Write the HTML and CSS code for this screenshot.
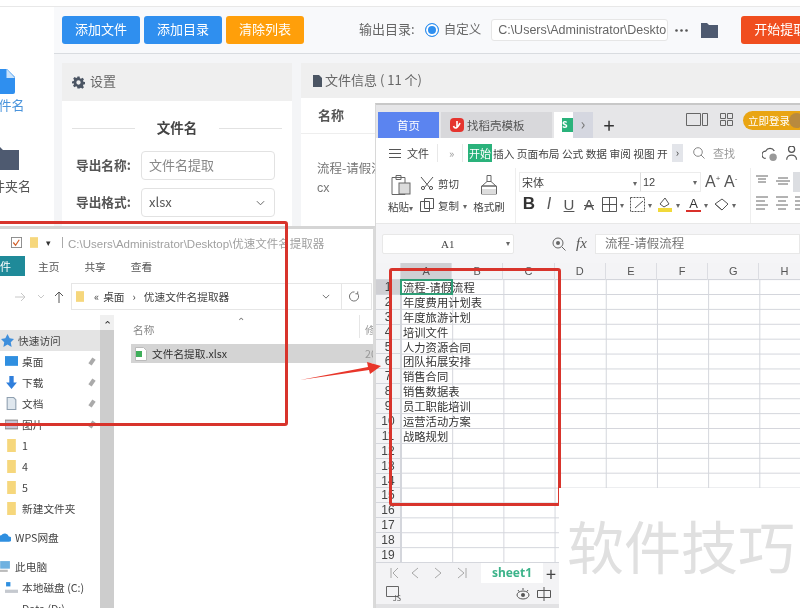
FILE: index.html
```html
<!DOCTYPE html>
<html lang="zh">
<head>
<meta charset="utf-8">
<title>文件名提取</title>
<link rel="stylesheet" href="styles.css">
</head>
<body>
<div class="stage">
  <div class="app">
    <aside class="side">
      <div class="side-item active">
        <svg class="side-ico" viewBox="0 0 30 25"><path fill="#2f8fef" d="M0 0h19l8 8v15a2 2 0 0 1-2 2H0z"/><path fill="#fff" d="M18.500 0v9h8.500z" opacity=".75"/></svg>
        <span>文件名</span>
      </div>
      <div class="side-item">
        <svg class="side-ico" viewBox="0 0 30 23"><path fill="#4e5a70" d="M0 0h11l3 3h16v20H0z"/></svg>
        <span>文件夹名</span>
      </div>
    </aside>
    <main class="main">
      <header class="toolbar">
        <button class="btn blue">添加文件</button>
        <button class="btn blue">添加目录</button>
        <button class="btn orange">清除列表</button>
        <span class="out-label">输出目录:</span>
        <span class="radio"></span>
        <span class="radio-text">自定义</span>
        <span class="path-box">C:\Users\Administrator\Desktop\优速</span>
        <svg class="dots" viewBox="0 0 13 3"><circle cx="1.500" cy="1.500" r="1.300" fill="#555"/><circle cx="6.500" cy="1.500" r="1.300" fill="#555"/><circle cx="11.500" cy="1.500" r="1.300" fill="#555"/></svg>
        <svg class="tool-folder" viewBox="0 0 17 15"><path fill="#4e5a70" d="M0 0h6l2 2h9v13H0z"/></svg>
        <button class="btn red">开始提取</button>
      </header>
      <div class="panels">
        <section class="settings">
          <div class="panel-head tall">
            <svg class="gear" viewBox="0 0 24 24"><path fill="#4b5563" d="M10 1h4l.6 3.200 2 .8 2.700-1.800 2.800 2.800-1.800 2.700.8 2 3.200.6v4l-3.200.6-.8 2 1.800 2.700-2.800 2.800-2.700-1.800-2 .8L14 23h-4l-.6-3.200-2-.8-2.700 1.800-2.800-2.800 1.800-2.700-.8-2L0 14v-4l3.200-.6.8-2L2.200 4.700 5 1.900l2.700 1.800 2-.8zM12 8a4 4 0 1 0 0 8 4 4 0 0 0 0-8z"/></svg>
            <span>设置</span>
          </div>
          <div class="settings-body">
            <div class="divider"><i></i><b>文件名</b><i></i></div>
            <div class="form-row"><label>导出名称:</label><span class="field muted">文件名提取</span></div>
            <div class="form-row"><label>导出格式:</label><span class="field">xlsx<svg class="chev" viewBox="0 0 10 6"><path fill="none" stroke="#666" stroke-width="1.100" d="M1 1l4 4 4-4"/></svg></span></div>
          </div>
        </section>
        <section class="files">
          <div class="panel-head">
            <svg class="doc" viewBox="0 0 9 12"><path fill="#4b5563" d="M0 0h6l3 3v9H0z"/></svg>
            <span>文件信息 ( 11 个)</span>
          </div>
          <div class="file-th">名称</div>
          <div class="file-td">流程-请假流程<br><small>cx</small></div>
        </section>
      </div>
    </main>
  </div>

  <section class="explorer">
    <div class="ex-title">
      <svg class="ex-check" viewBox="0 0 12 12"><rect x=".5" y=".5" width="11" height="11" fill="#fff" stroke="#888"/><path fill="none" stroke="#d2602a" stroke-width="1.300" d="M2.500 6l2.500 3 4-6"/></svg>
      <svg class="ico-folder" viewBox="0 0 9 12"><path fill="#f6d77c" d="M0 0h9v12H0z"/></svg>
      <span class="ex-drop">▾</span>
      <span class="ex-sep"></span>
      <span class="ex-path">C:\Users\Administrator\Desktop\优速文件名提取器</span>
    </div>
    <div class="ex-tabs">
      <span class="ex-tab-file">文件</span>
      <span>主页</span><span>共享</span><span>查看</span>
    </div>
    <div class="ex-nav">
      <svg class="nav-arrows" viewBox="0 0 50 12"><path fill="none" stroke="#c8c8c8" d="M0 6h10M6 2l4 4-4 4M23 4l3 3 3-3"/><path fill="none" stroke="#555" d="M44 12V1M40 5l4-4 4 4"/></svg>
      <div class="addr">
        <svg class="ico-folder" viewBox="0 0 9 12"><path fill="#f6d77c" d="M0 0h9v12H0z"/></svg>
        <span class="addr-a">«</span><span>桌面</span><span class="addr-b">›</span><span>优速文件名提取器</span>
        <svg class="addr-chev" viewBox="0 0 10 6"><path fill="none" stroke="#555" d="M1 1l4 4 4-4"/></svg>
        <span class="addr-refresh"><svg viewBox="0 0 12 12"><path fill="none" stroke="#666" d="M9.500 3A5 5 0 1 1 6 1M9.500 .5V3H7"/></svg></span>
      </div>
    </div>
    <div class="ex-body">
      <div class="pane">
        <div class="pane-list">
          <div class="pr sel lv0"><svg class="pi" viewBox="0 0 12 12"><path fill="#3f8fdc" d="M6 0l2 4 4 .5-3 3 .8 4.500L6 9.800 2.200 12 3 7.500 0 4.500 4 4z"/></svg>快速访问</div>
          <div class="pr"><svg class="pi" viewBox="0 0 12 12"><rect y="1" width="12" height="9" fill="#2f8fe0"/></svg>桌面<em></em></div>
          <div class="pr"><svg class="pi" viewBox="0 0 12 12"><path fill="#2f7fdc" d="M4 0h4v6h3l-5 6-5-6h3z"/></svg>下载<em></em></div>
          <div class="pr"><svg class="pi" viewBox="0 0 12 12"><path fill="#dfe7ee" stroke="#8fa0b0" d="M2 .5h6l2 2v9H2z"/></svg>文档<em></em></div>
          <div class="pr"><svg class="pi" viewBox="0 0 12 12"><rect y="2" width="12" height="8" fill="#c9c5d6" stroke="#888"/></svg>图片<em></em></div>
          <div class="pr"><svg class="pi" viewBox="0 0 12 12"><path fill="#f6d77c" d="M2 0h8v12H2z"/></svg>1</div>
          <div class="pr"><svg class="pi" viewBox="0 0 12 12"><path fill="#f6d77c" d="M2 0h8v12H2z"/></svg>4</div>
          <div class="pr"><svg class="pi" viewBox="0 0 12 12"><path fill="#f6d77c" d="M2 0h8v12H2z"/></svg>5</div>
          <div class="pr"><svg class="pi" viewBox="0 0 12 12"><path fill="#f6d77c" d="M2 0h8v12H2z"/></svg>新建文件夹</div>
          <div class="pr lv0 gap"><svg class="pi" viewBox="0 0 12 12"><path fill="#2f8fe0" d="M3 10a3 3 0 0 1 0-6 4 4 0 0 1 7 1 2.500 2.500 0 0 1 0 5z"/></svg>WPS网盘</div>
          <div class="pr lv0 gap"><svg class="pi" viewBox="0 0 12 12"><rect x="2" y="1" width="9" height="7" fill="#6fb1e0"/><path fill="#bbb" d="M0 9h9v2H0z"/></svg>此电脑</div>
          <div class="pr"><svg class="pi" viewBox="0 0 12 12"><path fill="#2f8fe0" d="M1 1h4v4H1z"/><path fill="#c5c9cf" d="M0 8h12v3H0z"/></svg>本地磁盘 (C:)</div>
          <div class="pr"><svg class="pi" viewBox="0 0 12 12"><path fill="#c5c9cf" d="M0 8h12v3H0z"/></svg>Data (D:)</div>
        </div>
        <div class="pane-scroll"><span>⌃</span></div>
      </div>
      <div class="list">
        <div class="list-sort">⌃</div>
        <div class="list-head"><span>名称</span><i></i><span class="col2">修</span></div>
        <div class="list-row">
          <svg class="xl" viewBox="0 0 12 14"><path fill="#fff" stroke="#bbb" d="M.5.500h8l3 3v10H.5z"/><rect x="1" y="4" width="6" height="6" fill="#3fae5a"/></svg>
          <span>文件名提取.xlsx</span><span class="col2">20</span>
        </div>
      </div>
    </div>
  </section>

  <section class="wps">
    <div class="w-tabs">
      <span class="w-home">首页</span>
      <span class="w-tab2">
        <svg viewBox="0 0 14 14"><rect width="14" height="14" rx="4" fill="#e5342f"/><path fill="none" stroke="#fff" stroke-width="1.600" d="M3.500 8c1 3 4 3 6.500-3M7 3v6"/></svg>
        找稻壳模板
      </span>
      <span class="w-tab3"><b>S</b></span>
      <span class="w-more">›</span>
      <span class="w-plus">+</span>
      <svg class="w-book" viewBox="0 0 22 13"><path fill="none" stroke="#666" d="M.5.500h14v12H.5zM16.500.500h5v12h-5z"/></svg>
      <svg class="w-grid" viewBox="0 0 13 13"><path fill="none" stroke="#666" d="M.5.500h5v5h-5zM7.500.500h5v5h-5zM.5 7.500h5v5h-5zM7.500 7.500h5v5h-5z"/></svg>
      <span class="w-login">立即登录<i class="w-avatar"></i></span>
    </div>
    <div class="w-menu">
      <svg class="m-burger" viewBox="0 0 12 9"><path stroke="#555" d="M0 .5h12M0 4.500h12M0 8.500h12"/></svg>
      <span class="m-file">文件</span>
      <span class="m-sep"></span>
      <span class="m-dbl">»</span>
      <span class="m-sep s2"></span>
      <span class="m-on">开始</span>
      <span class="m-items">插入 页面布局 公式 数据 审阅 视图 开</span>
      <span class="m-gt">›</span>
      <svg class="m-search" viewBox="0 0 12 12"><circle cx="5" cy="5" r="4.300" fill="none" stroke="#888"/><path stroke="#888" d="M8 8l3.500 3.500"/></svg>
      <span class="m-find">查找</span>
      <svg class="m-cloud" viewBox="0 0 30 12"><path fill="none" stroke="#555" d="M3 10a3 3 0 0 1 0-6 4 4 0 0 1 7 0M24 5a2.500 2.500 0 1 0 0-5 2.500 2.500 0 0 0 0 5zM20 11c0-5 8-5 8 0"/><circle cx="9" cy="9" r="3" fill="#999"/></svg>
    </div>
    <div class="ribbon">
      <div class="rb-clip">
        <svg class="big" viewBox="0 0 20 20"><path fill="#fff" stroke="#666" d="M1 2.500h13v17H1zM5 .5h5v4H5z"/><rect x="8" y="8" width="11" height="11" fill="#dcdcdc" stroke="#666"/></svg>
        <span>粘贴<small>▾</small></span>
      </div>
      <div class="rb-cut">
        <div class="rb-line"><svg viewBox="0 0 14 14"><path fill="none" stroke="#555" d="M1 1l9 11M13 1L4 12"/><circle cx="3" cy="12" r="1.600" fill="none" stroke="#555"/><circle cx="11" cy="12" r="1.600" fill="none" stroke="#555"/></svg>剪切</div>
        <div class="rb-line"><svg viewBox="0 0 14 14"><path fill="#fff" stroke="#555" d="M4.500.5h9v10h-9zM.5 3.500h9v10h-9z"/></svg>复制<small>▾</small></div>
      </div>
      <div class="rb-brush">
        <svg class="big" viewBox="0 0 18 20"><path fill="#fff" stroke="#666" d="M7 .5h4v6H7zM7 6.500L2 11h14l-5-4.500zM1.500 11h15v8h-15z"/><rect x="2" y="14" width="14" height="5" fill="#ddd"/></svg>
        <span>格式刷</span>
      </div>
      <div class="rb-font">
        <div class="font-row">
          <span class="fbox f1">宋体<small>▾</small></span><span class="fbox f2">12<small>▾</small></span>
          <span class="aa">A<sup>+</sup></span><span class="aa">A<sup>-</sup></span>
        </div>
        <div class="fmt-row">
          <b class="fb">B</b><i class="fi">I</i><u class="fu">U</u><s class="fs">A</s>
          <svg viewBox="0 0 15 15"><path fill="none" stroke="#555" d="M.5.500h14v14H.5zM7.500 .5v14M.5 7.500h14"/></svg><small>▾</small>
          <svg viewBox="0 0 15 15"><path fill="none" stroke="#555" stroke-dasharray="2 1" d="M.5.500h14v14H.5z"/><path stroke="#555" d="M5 11l8-7"/></svg><small>▾</small>
          <svg viewBox="0 0 15 15"><path fill="none" stroke="#555" d="M7 1L2 7l4 3 5-3z"/><rect y="11" width="14" height="4" fill="#f1d93a"/></svg><small>▾</small>
          <span class="fa">A</span><small>▾</small>
          <svg viewBox="0 0 15 15"><path fill="none" stroke="#555" d="M8 2l6 5-6 6-7-6zM1 7l7 6"/></svg><small>▾</small>
        </div>
      </div>
      <div class="rb-align">
        <svg viewBox="0 0 46 46"><rect x="38" y="4" width="8" height="20" fill="#dcdee2"/><path stroke="#666" d="M1 8h12M3 11h8M3 14h8M21 13h14M23 10h10M23 16h10M1 29h12M1 33h9M1 37h12M1 41h9M21 29h12M23 33h8M21 37h12M23 41h8M40 29h6M40 33h6M40 37h6M40 41h6"/></svg>
      </div>
    </div>
    <div class="formula">
      <span class="namebox">A1<small>▾</small></span>
      <svg class="fx-zoom" viewBox="0 0 14 14"><circle cx="6" cy="6" r="5" fill="none" stroke="#666"/><circle cx="6" cy="6" r="2" fill="#666"/><path stroke="#666" d="M10 10l3.500 3.500"/></svg>
      <i class="fx">fx</i>
      <span class="fbar">流程-请假流程</span>
    </div>
    <div class="sheet">
      <div class="col-head">
        <span class="corner"></span>
        <span class="on">A</span><span>B</span><span>C</span><span>D</span><span>E</span><span>F</span><span>G</span><span>H</span>
      </div>
      <div class="rows">
        <div class="r first"><span class="n">1</span><span class="c"><span class="active-cell"></span>流程-请假流程</span></div>
        <div class="r"><span class="n">2</span><span class="c">年度费用计划表</span></div>
        <div class="r"><span class="n">3</span><span class="c">年度旅游计划</span></div>
        <div class="r"><span class="n">4</span><span class="c">培训文件</span></div>
        <div class="r"><span class="n">5</span><span class="c">人力资源合同</span></div>
        <div class="r"><span class="n">6</span><span class="c">团队拓展安排</span></div>
        <div class="r"><span class="n">7</span><span class="c">销售合同</span></div>
        <div class="r"><span class="n">8</span><span class="c">销售数据表</span></div>
        <div class="r"><span class="n">9</span><span class="c">员工职能培训</span></div>
        <div class="r"><span class="n">10</span><span class="c">运营活动方案</span></div>
        <div class="r"><span class="n">11</span><span class="c">战略规划</span></div>
        <div class="r"><span class="n">12</span></div>
        <div class="r"><span class="n">13</span></div>
        <div class="r"><span class="n">14</span></div>
        <div class="r"><span class="n">15</span></div>
        <div class="r"><span class="n">16</span></div>
        <div class="r"><span class="n">17</span></div>
        <div class="r"><span class="n">18</span></div>
        <div class="r"><span class="n">19</span></div>
      </div>
      <div class="sheet-tabs">
        <svg viewBox="0 0 84 12"><path fill="none" stroke="#a8a8a8" d="M8 1L3 6l5 5M1 1v10M28 1l-6 5 6 5M45 1l6 5-6 5M68 1l6 5-6 5M76 1v10"/></svg>
        <span class="sheet1">sheet1</span>
        <span class="sheet-plus">+</span>
      </div>
      <div class="status">
        <svg class="st-js" viewBox="0 0 15 15"><path fill="none" stroke="#666" d="M.5.500h12v10H.5z"/><text x="7" y="15" font-size="7" fill="#555">JS</text></svg>
        <svg class="st-eye" viewBox="0 0 14 12"><ellipse cx="7" cy="7" rx="6" ry="4" fill="none" stroke="#555"/><circle cx="7" cy="7" r="2" fill="#555"/><path stroke="#555" d="M2 2l1 1.500M7 0v2M12 2l-1 1.500"/></svg>
        <svg class="st-read" viewBox="0 0 14 14"><path fill="none" stroke="#555" d="M.5 3.500h13v7H.5zM7 0v14"/></svg>
      </div>
    </div>
  </section>

  <div class="mark red-a"></div>
  <div class="mark red-b"></div>
  <svg class="arrow" viewBox="0 0 81 18"><polygon fill="#e8362a" points="0,18 68,5 67,0 81,4 70,12 69,8"/></svg>
  <div class="watermark">软件技巧</div>
</div>
</body>
</html>
```
FILE: styles.css
```css
* { box-sizing: border-box; }
html, body { margin: 0; padding: 0; }
body { width: 800px; height: 608px; overflow: hidden; background: #fff; font-family: "Noto Sans CJK SC", "Noto Sans", sans-serif; color: #444; }
svg { display: block; flex: none; }
.stage { position: relative; width: 800px; height: 608px; overflow: hidden; filter: blur(.35px); }

/* background application */
.app { display: flex; height: 608px; padding-top: 6px; background: #fff; }
.side { width: 54px; flex: none; padding-top: 62px; overflow: hidden; border-top: 1px solid #e8e8e8; }
.side-item { width: 64px; margin: 0 0 44px -27px; display: flex; flex-direction: column; align-items: center; font-size: 13px; line-height: 18px; color: #555; }
.side-item.active { color: #4a94dc; margin-bottom: 33px; }
.side-item.active span { margin-top: -1px; }
.side-ico { width: 30px; height: 25px; margin-bottom: 3px; margin-left: -4px; }
.side-item + .side-item .side-ico { width: 30px; height: 23px; margin: 0 0 7px -2px; }
.main { flex: 1; min-width: 0; background: #f4f5f7; }
.toolbar { height: 48px; display: flex; align-items: center; padding: 0 0 0 8px; background: #f8f9fb; border-top: 1px solid #e8e8e8; border-bottom: 1px solid #d9dce0; white-space: nowrap; }
.btn { height: 28px; border: 0; border-radius: 3px; color: #fff; font: 13px "Noto Sans CJK SC", sans-serif; padding: 0 0 3px; flex: none; }
.blue { width: 78px; margin-right: 4px; background: #2f8fef; }
.orange { width: 78px; background: #ff9f0a; }
.red { width: 78px; margin-left: 23px; background: #f04e1f; }
.out-label { flex: none; margin-left: 55px; padding-bottom: 3px; font-size: 13px; color: #666; }
.radio { flex: none; width: 14px; height: 14px; margin: 0 0 1px 10px; border-radius: 50%; background: #2f8fef; border: 1px solid #2f8fef; box-shadow: inset 0 0 0 2px #fff; }
.radio-text { flex: none; margin-left: 5px; padding-bottom: 3px; font-size: 12.500px; color: #666; }
.path-box { flex: none; width: 177px; height: 22px; margin-left: 10px; padding: 0 6px; overflow: hidden; background: #fff; border: 1px solid #e6e6e6; border-radius: 3px; font: 12.500px/21px "Liberation Sans", sans-serif; color: #666; }
.dots { width: 13px; height: 3px; margin-left: 7px; }
.tool-folder { width: 17px; height: 15px; margin-left: 13px; }
.panels { display: flex; gap: 9px; padding: 9px 0 0 8px; }
.settings { width: 230px; flex: none; }
.files { flex: 1; }
.panel-head { height: 35px; display: flex; align-items: center; gap: 5px; padding-left: 12px; background: #efefef; font-size: 13px; color: #666; white-space: nowrap; }
.panel-head span { padding-bottom: 2px; }
.panel-head.tall { height: 38px; padding-left: 10px; }
.panel-head.tall span { padding-bottom: 3px; }
.gear { width: 13px; height: 13px; }
.doc { width: 9px; height: 12px; margin-right: -2px; }
.settings-body { height: 300px; background: #fff; padding: 16px 10px 0; }
.divider { display: flex; align-items: center; justify-content: space-between; height: 20px; font-size: 13.500px; color: #444; }
.divider i { width: 63px; height: 1px; margin-top: 2px; background: #e2e2e2; }
.form-row { display: flex; align-items: center; gap: 11px; height: 29px; margin-top: 8px; padding-left: 4px; }
.divider + .form-row { margin-top: 14px; }
.form-row label { width: 54px; padding-bottom: 3px; font-size: 12.700px; font-weight: 700; color: #555; white-space: nowrap; }
.field { position: relative; width: 134px; height: 29px; padding-left: 7px; background: #fff; border: 1px solid #e2e2e2; border-radius: 4px; font: 13px/25px "Noto Sans CJK SC", sans-serif; color: #555; }
.field.muted { color: #888; }
.chev { position: absolute; right: 9px; top: 11px; width: 9px; height: 6px; }
.file-th { height: 36px; padding-left: 17px; background: #fff; border-bottom: 1px solid #eee; font-size: 13px; font-weight: 700; line-height: 34px; color: #555; }
.file-td { height: 300px; padding: 24px 0 0 16px; background: #fff; font-size: 12.500px; line-height: 19px; color: #777; white-space: nowrap; }
.file-td small { font: 12.500px "Liberation Sans", sans-serif; }

/* explorer */
.explorer { position: absolute; left: 0; top: 226px; width: 375px; height: 382px; display: flex; flex-direction: column; background: #fff; border-top: 3px solid #d5d5d5; border-right: 2px solid #dadada; font-size: 10.700px; color: #444; }
.ex-title { height: 27px; display: flex; align-items: center; padding-left: 11px; flex: none; }
.ex-check { width: 11px; height: 11px; }
.ico-folder { width: 8px; height: 11px; margin-left: 8px; }
.ex-drop { width: 8px; margin-left: 8px; font-size: 9px; color: #333; }
.ex-sep { width: 1px; height: 11px; margin: 0 5px 0 8px; background: #aaa; }
.ex-path { font-size: 11.500px; color: #a0a0a0; white-space: nowrap; font-family: "Liberation Sans", "Noto Sans CJK SC", sans-serif; }
.ex-tabs { height: 20px; flex: none; display: flex; align-items: center; gap: 25px; font-size: 10.700px; color: #555; }
.ex-tab-file { width: 25px; height: 20px; margin-right: -12px; overflow: hidden; white-space: nowrap; text-indent: -11px; background: #1f8a99; color: #fff; line-height: 20px; font-size: 11px; }
.ex-nav { height: 34px; flex: none; display: flex; align-items: center; padding: 7px 1px 0 15px; }
.nav-arrows { width: 50px; height: 12px; }
.addr { flex: 1; margin-left: 6px; height: 27px; display: flex; align-items: center; border: 1px solid #e6e6e6; padding-left: 4px; font-size: 10.700px; white-space: nowrap; color: #444; }
.addr .ico-folder { margin-left: 0; }
.addr-a { margin: 0 4px 0 10px; }
.addr-b { margin: 0 8px; }
.addr-chev { width: 8px; height: 5px; margin-left: auto; margin-right: 11px; }
.addr-refresh { width: 30px; height: 25px; padding: 7px 0 0 7px; border-left: 1px solid #e6e6e6; }
.addr-refresh svg { width: 11px; height: 11px; }
.ex-body { flex: 1; min-height: 0; display: flex; padding-top: 5px; overflow: hidden; }
.pane { width: 114px; flex: none; display: flex; }
.pane-list { width: 100px; flex: none; padding-top: 15px; }
.pr { height: 21px; display: flex; align-items: center; padding-left: 5px; gap: 4px; font-size: 10.700px; white-space: nowrap; position: relative; }
.pi { width: 13px; height: 13px; }
.pr em { position: absolute; left: 90px; top: 7px; width: 4px; height: 7px; background: #aaa; transform: rotate(35deg); }
.lv0 { padding-left: 0; margin-left: -2px; }
.sel { background: #e4e4e4; margin-left: 0; padding-left: 1px; }
.gap { margin-top: 8px; }
.pane-scroll { width: 14px; height: 100%; background: #cdcdcd; }
.pane-scroll span { display: block; height: 15px; background: #f0f0f0; text-align: center; font-size: 11px; line-height: 18px; color: #333; }
.list { flex: 1; position: relative; padding: 0 0 0 17px; overflow: hidden; }
.list-sort { position: absolute; left: 123px; top: -2px; font-size: 10px; color: #777; }
.list-head { height: 29px; display: flex; align-items: center; padding: 0 0 0 2px; font-size: 10.700px; color: #888; position: relative; }
.list-head i { position: absolute; left: 228px; top: 0; width: 1px; height: 23px; background: #e6e6e6; }
.list-row { height: 19px; display: flex; align-items: center; gap: 5px; padding-left: 4px; background: #d4d4d4; font-size: 10.700px; color: #333; white-space: nowrap; position: relative; }
.xl { width: 12px; height: 14px; }
.col2 { position: absolute; left: 234px; color: #999; }

/* wps */
.wps { position: absolute; left: 375px; top: 103px; width: 425px; height: 505px; display: flex; flex-direction: column; overflow: hidden; background: #e2e2e4; border-top: 2px solid #c8c8c8; border-left: 1px solid #d8d8d8; font-size: 12px; color: #444; }
.w-tabs { height: 33px; flex: none; display: flex; align-items: flex-end; padding-left: 2px; background: #e6e6e8; }
.w-tabs > * { flex: none; }
.w-home { width: 61px; height: 26px; background: #5b84f0; color: #fff; text-align: center; line-height: 27px; font-size: 11.500px; }
.w-tab2 { width: 111px; height: 26px; margin-left: 2px; display: flex; align-items: center; gap: 3px; padding-left: 9px; background: #d8d8db; font-size: 11.500px; color: #555; }
.w-tab2 svg { width: 14px; height: 14px; }
.w-tab3 { width: 19px; height: 26px; margin-left: 2px; padding: 6px 0 0 8px; background: #fff; }
.w-tab3 b { display: block; width: 11px; height: 14px; background: #2ab27b; color: #fff; font-size: 9px; line-height: 14px; }
.w-more { width: 20px; height: 26px; background: #d5d7e0; text-align: center; font-size: 16px; line-height: 22px; color: #777; }
.w-plus { width: 32px; text-align: center; font-size: 20px; line-height: 26px; color: #333; }
.w-book { width: 22px; height: 13px; margin: 0 12px 12px 61px; }
.w-grid { width: 13px; height: 13px; margin: 0 10px 12px 0; }
.w-login { width: 60px; height: 19px; margin-bottom: 8px; padding-left: 5px; border-radius: 10px 0 0 10px; background: #e9a513; color: #fff; font-size: 10.500px; line-height: 19px; white-space: nowrap; position: relative; }
.w-avatar { position: absolute; left: 46px; top: 2px; width: 15px; height: 15px; border-radius: 50%; background: #b98a3e; }
.w-menu { height: 30px; flex: none; display: flex; align-items: center; background: #fff; font-size: 11px; color: #444; white-space: nowrap; }
.w-menu > * { flex: none; }
.m-burger { width: 12px; height: 9px; margin-left: 13px; }
.m-file { margin-left: 6px; }
.m-sep { width: 1px; height: 18px; margin-left: 8px; background: #e8e8e8; }
.m-dbl { margin-left: 11px; width: 10px; color: #999; }
.m-sep.s2 { margin-left: 3px; }
.m-on { width: 24px; height: 18px; margin-left: 5px; background: #2ab27b; color: #fff; text-align: center; line-height: 18px; }
.m-items { width: 179px; margin-left: 1px; font-size: 10.700px; overflow: hidden; }
.m-gt { width: 11px; height: 18px; background: #e3e5ea; text-align: center; line-height: 16px; }
.m-search { width: 12px; height: 12px; margin-left: 10px; }
.m-find { margin-left: 8px; color: #999; }
.m-cloud { width: 37px; height: 15px; margin-left: 27px; }
.ribbon { height: 56px; flex: none; display: flex; padding-left: 9px; background: #fff; border-bottom: 1px solid #e8e8e8; }
.ribbon > * { flex: none; }
.rb-clip { width: 31px; padding-top: 7px; display: flex; flex-direction: column; align-items: center; font-size: 10.500px; white-space: nowrap; }
.big { width: 20px; height: 20px; margin-bottom: 4px; }
.rb-clip small, .rb-line small, .fbox small, .fmt-row small, .namebox small { font-size: 8px; color: #666; }
.rb-cut { width: 54px; padding: 4px 0 0 4px; }
.rb-line { display: flex; align-items: center; gap: 4px; height: 22px; font-size: 10.500px; white-space: nowrap; }
.rb-line svg { width: 14px; height: 14px; }
.rb-brush { width: 38px; padding-top: 7px; display: flex; flex-direction: column; align-items: center; font-size: 10.500px; white-space: nowrap; }
.rb-font { width: 235px; margin-left: 7px; padding: 4px 0 0 3px; border-left: 1px solid #eee; }
.font-row { display: flex; align-items: center; height: 20px; }
.fbox { height: 20px; display: flex; align-items: center; justify-content: space-between; padding: 0 3px 0 2px; border: 1px solid #ececec; font-size: 11px; }
.f1 { width: 122px; }
.f2 { width: 61px; border-left: 1px solid #ddd; margin-left: -1px; font-family: "Liberation Sans", sans-serif; }
.aa { width: 19px; padding-left: 4px; font: 16px "Liberation Sans", sans-serif; color: #555; white-space: nowrap; }
.aa sup { font-size: 8px; line-height: 0; }
.fmt-row { display: flex; align-items: center; height: 24px; }
.fmt-row svg { width: 15px; height: 15px; margin-left: 0; }
.fmt-row small { width: 13px; padding-left: 3px; }
.fb, .fi, .fu, .fs, .fa { font: 700 17px "Liberation Sans", sans-serif; width: 20px; text-align: center; color: #333; }
.fi { font: italic 400 16px "Liberation Sans", sans-serif; color: #555; }
.fu, .fs { font-weight: 400; font-size: 15px; color: #555; }
.fs { width: 23px; padding-right: 3px; }
.fa { width: 15px; font-weight: 400; border-bottom: 2px solid #d9302a; line-height: 13px; font-size: 13px; }
.rb-align { width: 50px; padding: 0 0 0 4px; border-left: 1px solid #eee; }
.rb-align svg { width: 46px; height: 46px; }
.formula { height: 39px; flex: none; display: flex; align-items: center; padding-left: 6px; background: #f5f5f7; }
.namebox { width: 132px; height: 20px; display: flex; align-items: center; justify-content: space-between; padding: 0 3px 0 58px; background: #fff; border: 1px solid #e8e8e8; border-radius: 2px; font: 11px "Liberation Serif", serif; }
.fx-zoom { width: 14px; height: 14px; margin-left: 38px; }
.fx { margin-left: 10px; width: 14px; font: italic 15px "Liberation Serif", serif; color: #555; }
.fbar { flex: 1; height: 20px; margin-left: 5px; padding-left: 9px; background: #fff; border: 1px solid #e8e8e8; font-size: 12.500px; line-height: 16px; color: #777; }
.sheet { flex: 1; min-height: 0; display: flex; flex-direction: column; }
.col-head { height: 17px; flex: none; display: grid; grid-template-columns: 25px repeat(8, 51.2px); background: #f4f4f6; border-bottom: 1px solid #d4d6dc; font: 11px/17px "Liberation Sans", sans-serif; text-align: center; color: #555; }
.col-head span { border-right: 1px solid #dcdde2; }
.col-head .on { background: #cfcfd3; }
.rows { height: 283px; flex: none; background-color: #fff; background-image: linear-gradient(#d4d6dc 1px, transparent 1px), linear-gradient(90deg, #d4d6dc 1px, transparent 1px); background-size: 100% 14.900px, 51.200px 100%; background-position: 0 14px, 25px 0; }
.r { height: 14.900px; display: flex; font-size: 11px; line-height: 14.500px; color: #333; white-space: nowrap; }
.n { width: 25px; flex: none; background: #f4f4f6; text-align: center; font: 12px/15px "Liberation Sans", sans-serif; color: #444; border-bottom: 1px solid #d4d6dc; border-right: 1px solid #d4d6dc; }
.first .n { background: #cfcfd3; }
.c { position: relative; padding-left: 2px; font-size: 11.300px; }
.active-cell { position: absolute; left: -1px; top: -1px; width: 52.500px; height: 16px; border: 2px solid #2f9e76; }
.sheet-tabs { height: 20px; flex: none; display: flex; align-items: center; padding-left: 14px; background: #f3f3f5; }
.sheet-tabs svg { width: 84px; height: 12px; }
.sheet1 { width: 62px; height: 20px; margin-left: 7px; background: #fff; text-align: center; font: 700 12px/20px "Noto Sans", sans-serif; color: #3cb38a; }
.sheet-plus { margin-left: 3px; font-size: 18px; line-height: 20px; color: #444; }
.status { height: 21px; flex: none; display: flex; align-items: center; padding-left: 10px; background: #f3f3f5; }
.st-js { width: 15px; height: 15px; }
.st-eye { width: 14px; height: 12px; margin-left: 115px; }
.st-read { width: 14px; height: 14px; margin-left: 7px; }

/* annotations */
.mark { position: absolute; border: 3px solid #d8342c; border-radius: 3px; }
.red-a { left: -6px; top: 221px; width: 294px; height: 205px; }
.red-b { left: 389px; top: 268px; width: 172px; height: 238px; }
.arrow { position: absolute; left: 300px; top: 362px; width: 81px; height: 18px; }
.watermark { position: absolute; left: 559px; top: 488px; width: 241px; height: 120px; padding-left: 8px; background: #fff; font-size: 57px; font-weight: 400; line-height: 112px; color: #e0e0e0; white-space: nowrap; }
```
